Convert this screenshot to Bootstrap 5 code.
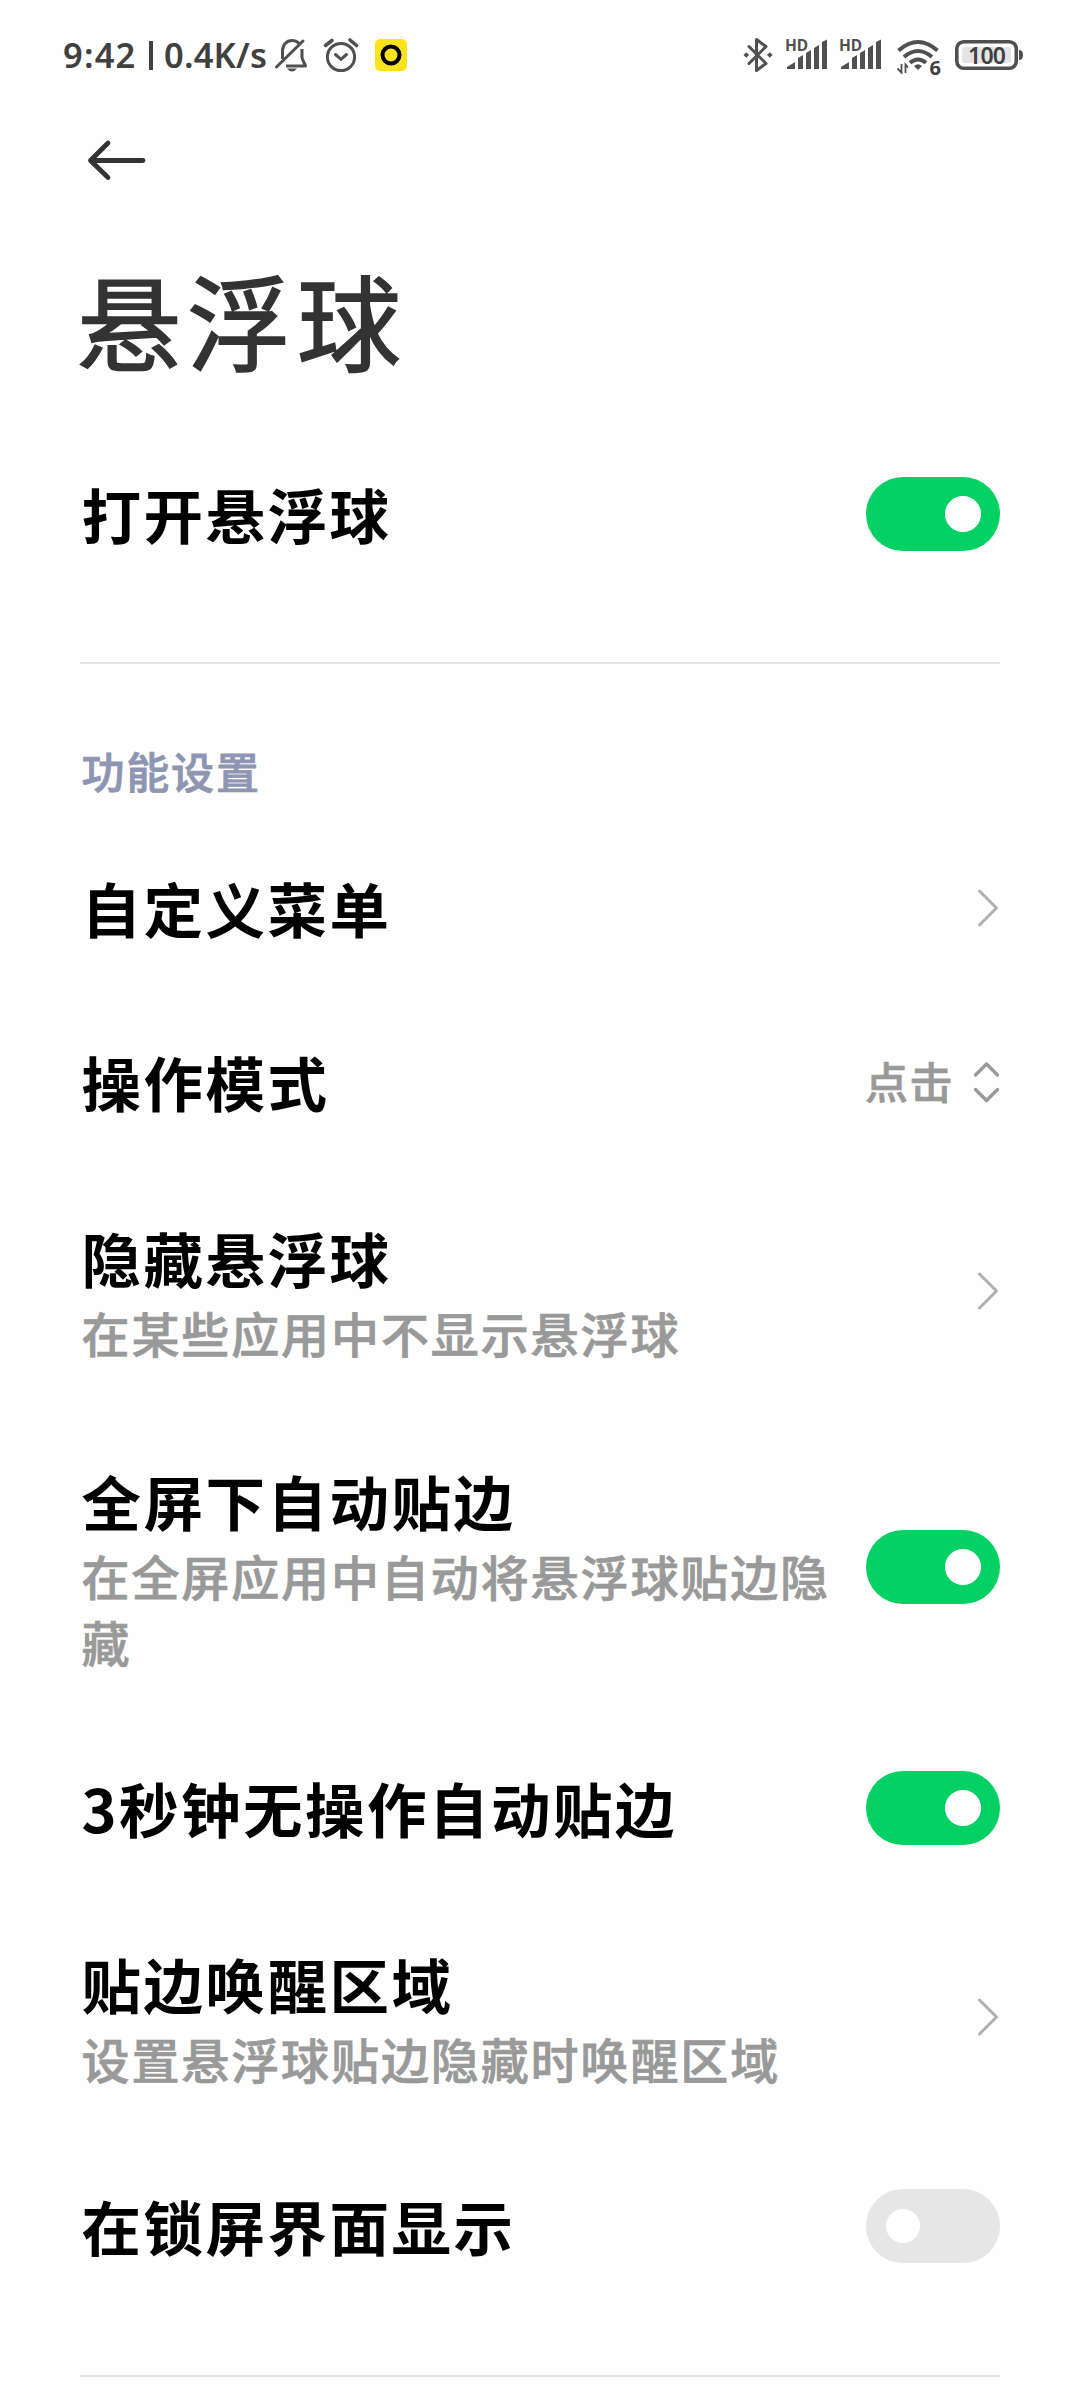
<!DOCTYPE html>
<html lang="zh-CN">
<head>
<meta charset="utf-8">
<meta name="viewport" content="width=device-width, initial-scale=1">
<title>悬浮球</title>
<link href="https://cdn.jsdelivr.net/npm/bootstrap@5.3.0/dist/css/bootstrap.min.css" rel="stylesheet">
<style>
  body { width: 1080px; height: 2400px; overflow: hidden; background: #fefefe; font-family: "Noto Sans CJK SC", sans-serif; }
  .status-bar { height: 110px; padding-left: 63px; padding-right: 57px; color: #404040; }
  .status-text { font: 600 34.5px/50px "Noto Sans", sans-serif; white-space: pre; }
  .status-icon { display: block; flex: none; color: #505050; overflow: visible; }
  .app-bar { height: 100px; padding: 28px 0 0 86px; }
  .page-title { height: 228px; padding-left: 77px; font-size: 104px; line-height: 217px; letter-spacing: 6px; font-weight: 400; color: #333; -webkit-text-stroke: 1.6px #333; }
  .setting-row { min-height: 174.3px; padding: 0 80px 0 81.5px; border: 0; background: none; }
  .row-name { font-size: 59.5px; line-height: 84px; letter-spacing: 2.5px; font-weight: 700; color: #000; margin-top: -2px; }
  .row-note { font-size: 48px; line-height: 66px; letter-spacing: 1.9px; font-weight: 500; color: #999; -webkit-text-stroke: .7px #999; }
  .row-two { min-height: 243px; }
  .row-three { min-height: 309px; }
  .group-label { height: 156.5px; padding: 76px 80px 0 81.5px; font-size: 43px; line-height: 60px; letter-spacing: 1.8px; font-weight: 500; color: #8d95b3; -webkit-text-stroke: .8px #8d95b3; }
  .row-value { font-size: 43px; line-height: 60px; letter-spacing: 1.5px; font-weight: 500; color: #999; margin: -3px 18px 0 0; -webkit-text-stroke: .7px #999; }
  .form-switch .toggle { width: 134px; height: 74px; margin: 0; border: 0; border-radius: 37px; float: none; display: block;
    background: radial-gradient(circle at 37px 37px, #fefefe 16.6px, transparent 17.4px) #e6e6e6; }
  .form-switch .toggle:checked { background: radial-gradient(circle at 97px 37px, #fff 17.6px, transparent 18.4px) #04d163; }
  .rule { margin: 0 80px; height: 2px; background: #e4e4e4; }
</style>
<script src="https://cdn.jsdelivr.net/npm/bootstrap@5.3.0/dist/js/bootstrap.bundle.min.js"></script>
</head>
<body>
<header class="status-bar d-flex align-items-center">
  <span class="status-text" style="width:85px;letter-spacing:1.2px">9:42</span>
  <svg class="status-icon" width="5" height="34" viewBox="0 0 5 34"><path d="M3 3v29" stroke="#404040" stroke-width="4"/></svg>
  <span class="status-text" style="width:120px;padding-left:11px;letter-spacing:.2px">0.4K/s</span>
  <svg class="status-icon" width="36" height="38" viewBox="273 36 36 38" fill="none" stroke="currentColor" stroke-width="3">
    <path d="M282.5 59V51c0-6 4-10.500 9.500-10.500 3 0 5.500 1 7 3M302 49v8c0 3 3 6.500 3.500 9H286" stroke-linejoin="round"/><path d="M276.500 67 303 41" stroke-linecap="round"/><path d="M287 68.500h10q-2 3-5 3t-5-3z" fill="currentColor" stroke="none"/>
  </svg>
  <svg class="status-icon" style="margin-left:12px" width="40" height="38" viewBox="321 36 40 38" fill="none" stroke="currentColor" stroke-width="3" stroke-linecap="round">
    <circle cx="341" cy="57" r="13.600"/><path d="m335.500 54.500 5.500 4.800 5.500-4.800"/><path d="m325.500 45.500 6.500-5M350 40l6.500 5.500" stroke-width="3.600"/>
  </svg>
  <svg class="status-icon" style="margin-left:14px" width="32" height="38" viewBox="375 36 32 38"><rect x="375" y="39" width="32" height="32" rx="5" fill="#ffe31a"/><circle cx="391" cy="55" r="8.500" fill="none" stroke="#000" stroke-width="4"/></svg>

  <svg class="status-icon ms-auto" width="32" height="38" viewBox="742 36 32 38" fill="none" stroke="currentColor" stroke-width="3" stroke-linejoin="round" stroke-linecap="round">
    <path d="m749 46.500 17 17-9.500 7V39.500l9.500 7-17 17"/><path d="m743.500 55 2.800-2.800 2.800 2.800-2.800 2.800zM767 55l2.800-2.800 2.800 2.800-2.800 2.800z" fill="currentColor" stroke="none"/>
  </svg>
  <svg class="status-icon" style="margin-left:11px" width="44" height="46" viewBox="785 32 44 46" fill="currentColor">
    <text x="785" y="50.500" font-family="Noto Sans" font-size="15.500" font-weight="700" textLength="23">HD</text>
    <path d="M787 69v-2l8-5v7zM798 69V58l5-3v14zM806 69V53l5-3v19zM814 69V48l5-3v24zM822 69V42l5-2.500V69z"/>
  </svg>
  <svg class="status-icon" style="margin-left:10px" width="44" height="46" viewBox="785 32 44 46" fill="currentColor">
    <text x="785" y="50.500" font-family="Noto Sans" font-size="15.500" font-weight="700" textLength="23">HD</text>
    <path d="M787 69v-2l8-5v7zM798 69V58l5-3v14zM806 69V53l5-3v19zM814 69V48l5-3v24zM822 69V42l5-2.500V69z"/>
  </svg>
  <svg class="status-icon" style="margin-left:12px" width="47" height="54" viewBox="895 28 47 54" fill="none" stroke="currentColor" stroke-width="4">
    <path d="M898.500 50.500q19.500-17 39 0M904 57q14-12 28 0M910 62.800q8-6.500 16 0"/><path d="m918 70-4-4q4-3.500 8 0z" fill="currentColor" stroke="none"/>
    <path d="M901.500 64v8.500l-4-4M905.500 73v-8.500l2.500 3" stroke-width="1.800"/>
    <text x="929.500" y="74.500" font-family="Noto Sans" font-size="20" font-weight="700" fill="#404040" stroke="none">6</text>
  </svg>
  <svg class="status-icon" style="margin-left:12px" width="69" height="38" viewBox="954 36 69 38" fill="none">
    <rect x="956.800" y="41.800" width="59.500" height="26.500" rx="7" stroke="currentColor" stroke-width="3.600"/><rect x="962" y="47" width="49" height="16" rx="3" fill="#e4e4e4"/><path d="M1019 50q4 0 4 5t-4 5z" fill="currentColor"/>
    <text x="968" y="63.500" font-family="Noto Sans" font-size="23" font-weight="600" fill="#404040" textLength="38">100</text>
  </svg>
</header>

<nav class="app-bar">
  <svg class="d-block" width="62" height="44" viewBox="86 138 62 44" fill="none" stroke="#333" stroke-width="4.800" stroke-linecap="round" stroke-linejoin="round"><path d="M143 160.500H90.500M108 143 90.500 160.500 108 177.500"/></svg>
</nav>
<h1 class="page-title m-0">悬浮球</h1>

<main>
  <div class="setting-row d-flex align-items-center justify-content-between" style="height:152px;min-height:0">
    <div class="row-name">打开悬浮球</div>
    <div class="form-check form-switch m-0 p-0"><input class="form-check-input toggle" type="checkbox" role="switch" checked aria-label="打开悬浮球"></div>
  </div>
  <div style="height:72px"></div>
  <div class="rule"></div>
  <h2 class="group-label m-0">功能设置</h2>

  <div class="list-group list-group-flush">
    <div class="setting-row list-group-item d-flex align-items-center justify-content-between">
      <div class="row-name">自定义菜单</div>
      <svg width="24" height="40" viewBox="0 0 24 40" fill="none" stroke="#b0b0b0" stroke-width="3" stroke-linecap="round" stroke-linejoin="round"><path d="m3.500 3 17 17-17 17"/></svg>
    </div>
    <div class="setting-row list-group-item d-flex align-items-center justify-content-between">
      <div class="row-name">操作模式</div>
      <div class="d-flex align-items-center"><span class="row-value">点击</span>
        <svg width="28" height="42" viewBox="0 0 28 42" fill="none" stroke="#999" stroke-width="3.400" stroke-linecap="round" stroke-linejoin="round"><path d="M3.500 14 14.500 3 25.500 14M3.500 28.500l11 11 11-11"/></svg></div>
    </div>
    <div class="setting-row row-two list-group-item d-flex align-items-center justify-content-between">
      <div><div class="row-name">隐藏悬浮球</div><div class="row-note">在某些应用中不显示悬浮球</div></div>
      <svg width="24" height="40" viewBox="0 0 24 40" fill="none" stroke="#b0b0b0" stroke-width="3" stroke-linecap="round" stroke-linejoin="round"><path d="m3.500 3 17 17-17 17"/></svg>
    </div>
    <div class="setting-row row-three list-group-item d-flex align-items-center justify-content-between">
      <div style="width:754px"><div class="row-name">全屏下自动贴边</div><div class="row-note">在全屏应用中自动将悬浮球贴边隐藏</div></div>
      <div class="form-check form-switch m-0 p-0"><input class="form-check-input toggle" type="checkbox" role="switch" checked aria-label="全屏下自动贴边"></div>
    </div>
    <div class="setting-row list-group-item d-flex align-items-center justify-content-between">
      <div class="row-name">3秒钟无操作自动贴边</div>
      <div class="form-check form-switch m-0 p-0"><input class="form-check-input toggle" type="checkbox" role="switch" checked aria-label="3秒钟无操作自动贴边"></div>
    </div>
    <div class="setting-row row-two list-group-item d-flex align-items-center justify-content-between">
      <div><div class="row-name">贴边唤醒区域</div><div class="row-note">设置悬浮球贴边隐藏时唤醒区域</div></div>
      <svg width="24" height="40" viewBox="0 0 24 40" fill="none" stroke="#b0b0b0" stroke-width="3" stroke-linecap="round" stroke-linejoin="round"><path d="m3.500 3 17 17-17 17"/></svg>
    </div>
    <div class="setting-row list-group-item d-flex align-items-center justify-content-between">
      <div class="row-name">在锁屏界面显示</div>
      <div class="form-check form-switch m-0 p-0"><input class="form-check-input toggle" type="checkbox" role="switch" aria-label="在锁屏界面显示"></div>
    </div>
  </div>
  <div style="height:62.3px"></div>
  <div class="rule"></div>
</main>
</body>
</html>
